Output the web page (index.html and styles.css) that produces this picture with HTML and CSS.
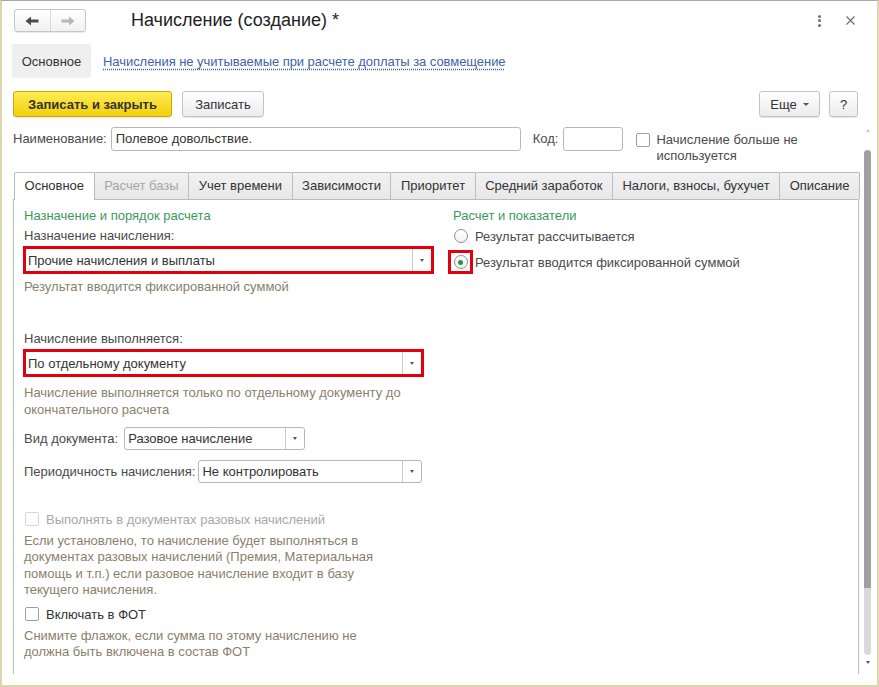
FILE: index.html
```html
<!DOCTYPE html>
<html lang="ru">
<head>
<meta charset="utf-8">
<title>Начисление (создание)</title>
<link rel="stylesheet" href="styles.css">
</head>
<body>
<div class="window">
  <header class="head">
    <div class="nav">
      <span class="nav-btn"><svg width="14" height="10" viewBox="0 0 14 10"><path d="M0.5 5 L6 0.5 V3.5 H13.5 V6.5 H6 V9.5 Z" fill="#4a4a4a"/></svg></span>
      <span class="nav-btn"><svg width="14" height="10" viewBox="0 0 14 10"><path d="M13.5 5 L8 0.5 V3.5 H0.5 V6.5 H8 V9.5 Z" fill="#b8b8b8"/></svg></span>
    </div>
    <h1 class="title">Начисление (создание) *</h1>
    <div class="head-tools">
      <span class="kebab"><i></i><i></i><i></i></span>
      <svg class="close" width="9" height="9" viewBox="0 0 9 9"><path d="M0.5 0.5 L8.5 8.5 M8.5 0.5 L0.5 8.5" stroke="#6a6a6a" stroke-width="1.1"/></svg>
    </div>
  </header>

  <nav class="subnav">
    <span class="subnav-current">Основное</span>
    <a class="subnav-link" href="#">Начисления не учитываемые при расчете доплаты за совмещение</a>
  </nav>

  <div class="toolbar">
    <button class="btn btn-primary">Записать и закрыть</button>
    <button class="btn btn-save">Записать</button>
    <span class="spacer"></span>
    <button class="btn btn-more">Еще <span class="caret"></span></button>
    <button class="btn btn-help">?</button>
  </div>

  <div class="scroll-area">
    <div class="scroll-content">
      <div class="name-row">
        <span class="field-label">Наименование:</span>
        <div class="input input-name">Полевое довольствие.</div>
        <span class="field-label code-label">Код:</span>
        <div class="input input-code"></div>
        <div class="check-group">
          <span class="checkbox"></span>
          <span class="check-text">Начисление больше не используется</span>
        </div>
      </div>

      <div class="tabs">
        <span class="tab active">Основное</span>
        <span class="tab disabled">Расчет базы</span>
        <span class="tab">Учет времени</span>
        <span class="tab">Зависимости</span>
        <span class="tab">Приоритет</span>
        <span class="tab">Средний заработок</span>
        <span class="tab">Налоги, взносы, бухучет</span>
        <span class="tab">Описание</span>
      </div>

      <div class="panel">
        <div class="col-left">
          <div class="section-title">Назначение и порядок расчета</div>
          <div class="label">Назначение начисления:</div>
          <div class="annot annot-wide">
            <div class="combo">
              <span class="combo-text">Прочие начисления и выплаты</span>
              <span class="combo-btn"><span class="tri"></span></span>
            </div>
          </div>
          <div class="hint hint-first">Результат вводится фиксированной суммой</div>

          <div class="label label-gap">Начисление выполняется:</div>
          <div class="annot annot-mid">
            <div class="combo">
              <span class="combo-text">По отдельному документу</span>
              <span class="combo-btn"><span class="tri"></span></span>
            </div>
          </div>
          <div class="hint hint-doc">Начисление выполняется только по отдельному документу до окончательного расчета</div>

          <div class="field-row row-doc">
            <span class="label-inline">Вид документа:</span>
            <div class="select select-doc">
              <span class="combo-text">Разовое начисление</span>
              <span class="combo-btn"><span class="tri"></span></span>
            </div>
          </div>
          <div class="field-row row-period">
            <span class="label-inline">Периодичность начисления:</span>
            <div class="select select-period">
              <span class="combo-text">Не контролировать</span>
              <span class="combo-btn"><span class="tri"></span></span>
            </div>
          </div>

          <div class="check-row check-disabled">
            <span class="checkbox"></span>
            <span>Выполнять в документах разовых начислений</span>
          </div>
          <div class="hint para">Если установлено, то начисление будет выполняться в документах разовых начислений (Премия, Материальная помощь и т.п.) если разовое начисление входит в базу текущего начисления.</div>

          <div class="check-row check-fot">
            <span class="checkbox"></span>
            <span>Включать в ФОТ</span>
          </div>
          <div class="hint para">Снимите флажок, если сумма по этому начислению не должна быть включена в состав ФОТ</div>
        </div>

        <div class="col-right">
          <div class="section-title right-title">Расчет и показатели</div>
          <div class="radio-row first">
            <span class="radio"></span>
            <span>Результат рассчитывается</span>
          </div>
          <div class="radio-row second">
            <span class="annot annot-radio"><span class="radio checked"></span></span>
            <span>Результат вводится фиксированной суммой</span>
          </div>
        </div>
      </div>
    </div>

    <div class="scrollbar">
      <div class="sb-up"><span class="tri tri-up"></span></div>
      <div class="sb-thumb"></div>
      <div class="sb-track"></div>
      <div class="sb-down"><span class="tri"></span></div>
    </div>
  </div>
</div>
</body>
</html>
```

FILE: styles.css
```css
html, body {
  margin: 0;
  padding: 0;
  background: #fff;
}

body {
  font-family: "Liberation Sans", Arial, sans-serif;
  font-size: 13px;
  color: #333;
}

.window {
  box-sizing: border-box;
  width: 879px;
  height: 687px;
  border-top: 1px solid #a8a8a8;
  border-left: 2px solid #ddd6ad;
  border-right: 2px solid #ddd6ad;
  border-bottom: 2px solid #ddd6ad;
  display: flex;
  flex-direction: column;
  overflow: hidden;
  background: #fff;
}

/* ---------- header ---------- */
.head {
  display: flex;
  align-items: center;
  height: 23px;
  margin-top: 8px;
  padding: 0 22px 0 12px;
}

.nav {
  display: flex;
  box-sizing: border-box;
  width: 72px;
  height: 23px;
  border: 1px solid #c6c6c6;
  border-radius: 3px;
  background: linear-gradient(#ffffff, #f1f1f1);
  box-shadow: 0 1px 1px rgba(0, 0, 0, 0.08);
}

.nav-btn {
  flex: 1;
  display: flex;
  align-items: center;
  justify-content: center;
}

.nav-btn + .nav-btn {
  border-left: 1px solid #d8d8d8;
}

.title {
  flex: 1;
  margin: 0 0 0 45px;
  font-size: 18px;
  font-weight: normal;
  color: #1e1e1e;
  line-height: 23px;
}

.head-tools {
  display: flex;
  align-items: center;
}

.kebab {
  display: flex;
  flex-direction: column;
  gap: 1.5px;
  margin-right: 25px;
}

.kebab i {
  display: block;
  width: 3px;
  height: 3px;
  border-radius: 50%;
  background: #6f6f6f;
}

/* ---------- sub navigation ---------- */
.subnav {
  display: flex;
  align-items: center;
  height: 34px;
  margin-top: 12px;
  padding-left: 10px;
}

.subnav-current {
  box-sizing: border-box;
  display: flex;
  align-items: center;
  justify-content: center;
  width: 79px;
  height: 34px;
  background: #efefef;
  border-radius: 3px;
  color: #333;
}

.subnav-link {
  margin-left: 12px;
  color: #3f63a8;
  letter-spacing: -0.05px;
  text-decoration: underline dotted;
  text-underline-offset: 3px;
}

/* ---------- toolbar ---------- */
.toolbar {
  display: flex;
  align-items: center;
  height: 26px;
  margin-top: 13px;
  padding: 0 19px 0 11px;
}

.btn {
  box-sizing: border-box;
  height: 26px;
  padding: 0 13px;
  border: 1px solid #c4c4c4;
  border-radius: 3px;
  background: linear-gradient(#ffffff, #ececec);
  box-shadow: 0 1px 1px rgba(0, 0, 0, 0.1);
  font-family: "Liberation Sans", Arial, sans-serif;
  font-size: 13px;
  color: #333;
  display: flex;
  align-items: center;
  justify-content: center;
}

.btn-primary {
  width: 159px;
  padding: 0;
  font-weight: bold;
  background: linear-gradient(#ffeb55, #f3d00c);
  border-color: #c9a80b;
}

.btn-save {
  width: 82px;
  margin-left: 10px;
  padding: 0;
}

.spacer {
  flex: 1;
}

.btn-more {
  width: 61px;
  padding: 0;
  gap: 6px;
}

.btn-help {
  width: 29px;
  margin-left: 9px;
  padding: 0;
}

.caret {
  width: 0;
  height: 0;
  border-left: 3px solid transparent;
  border-right: 3px solid transparent;
  border-top: 3px solid #555;
  margin-top: 1px;
}

/* ---------- scroll area ---------- */
.scroll-area {
  display: flex;
  height: 550px;
  margin-top: 7px;
}

.scroll-content {
  flex: 1;
  overflow: hidden;
  padding: 3px 3px 0 11px;
}

.scrollbar {
  width: 7px;
  margin: 0 6px 0 3px;
  display: flex;
  flex-direction: column;
}

.sb-up {
  height: 26px;
  display: flex;
  justify-content: center;
  padding-top: 5px;
  box-sizing: border-box;
}

.sb-thumb {
  height: 438px;
  background: #a0a0a0;
  border-radius: 4px 4px 0 0;
}

.sb-track {
  height: 67px;
  background: #d9d9d9;
  border-radius: 0 0 4px 4px;
}

.sb-down {
  display: flex;
  justify-content: center;
  padding-top: 6px;
}

.tri {
  width: 0;
  height: 0;
  border-left: 2.5px solid transparent;
  border-right: 2.5px solid transparent;
  border-top: 3px solid #555;
}

.tri-up {
  border-top: none;
  border-bottom: 3px solid #c4c4c4;
}

/* ---------- name row ---------- */
.name-row {
  display: flex;
  align-items: flex-start;
}

.field-label {
  line-height: 24px;
  color: #4a4a4a;
  margin-right: 4px;
}

.code-label {
  margin-left: 12px;
  margin-right: 5px;
}

.input {
  box-sizing: border-box;
  height: 24px;
  border: 1px solid #b8b8b8;
  border-radius: 3px;
  background: #fff;
  padding: 0 4px;
  line-height: 22px;
  color: #333;
}

.input-name {
  width: 410px;
}

.input-code {
  width: 60px;
}

.check-group {
  display: flex;
  align-items: flex-start;
  margin-left: 13px;
  padding-top: 6px;
}

.checkbox {
  flex: none;
  box-sizing: border-box;
  width: 14px;
  height: 14px;
  border: 1px solid #9f9f9f;
  border-radius: 2px;
  background: #fff;
}

.check-text {
  width: 160px;
  margin-left: 6px;
  line-height: 16px;
  margin-top: -1px;
  color: #4a4a4a;
}

/* ---------- tabs ---------- */
.tabs {
  display: flex;
  align-items: flex-start;
  width: 846px;
  height: 28px;
  margin-top: 8px;
  margin-bottom: -1px;
  padding-left: 1px;
  box-sizing: border-box;
  position: relative;
  z-index: 1;
}

.tab {
  flex: 1 0 auto;
  box-sizing: border-box;
  height: 27px;
  padding: 0 9px;
  margin-right: -1px;
  border: 1px solid #bcbcbc;
  border-bottom: none;
  border-radius: 2px 2px 0 0;
  background: linear-gradient(#f1f1f1, #e8e8e8);
  line-height: 26px;
  text-align: center;
  color: #333;
  white-space: nowrap;
}

.tab.active {
  height: 28px;
  background: #fff;
}

.tab.disabled {
  color: #a6a6a6;
}

/* ---------- panel ---------- */
.panel {
  display: flex;
  width: 846px;
  box-sizing: border-box;
  border: 1px solid #bcbcbc;
  border-bottom: none;
  padding: 8px 0 40px 9px;
}

.col-left {
  width: 411px;
  flex: none;
}

.col-right {
  margin-left: 14px;
}

.section-title {
  color: #3a9a5c;
  line-height: 16px;
  padding-left: 1px;
}

.right-title {
  padding-left: 5px;
}

.label {
  margin-top: 4px;
  line-height: 16px;
  color: #4a4a4a;
  padding-left: 1px;
}

.label-gap {
  margin-top: 36px;
}

.annot {
  border: 3px solid #e2000e;
  margin-top: 2px;
}

.annot-mid {
  width: 395px;
}

.combo {
  display: flex;
  align-items: center;
  height: 22px;
  background: #fff;
}

.combo-text {
  flex: 1;
  padding-left: 2px;
  color: #333;
  white-space: nowrap;
}

.combo-btn {
  align-self: stretch;
  width: 18px;
  border-left: 1px solid #cacaca;
  display: flex;
  align-items: center;
  justify-content: center;
}

.hint {
  color: #8a7f6b;
  line-height: 16px;
  padding-left: 1px;
}

.hint-first {
  margin-top: 5px;
}

.hint-doc {
  margin-top: 7px;
  line-height: 17px;
}

.field-row {
  display: flex;
  align-items: center;
  padding-left: 1px;
}

.row-doc {
  margin-top: 9px;
}

.row-period {
  margin-top: 10px;
}

.label-inline {
  color: #4a4a4a;
  margin-right: 3px;
}

.row-doc .label-inline {
  margin-right: 6px;
}

.select {
  box-sizing: border-box;
  display: flex;
  align-items: center;
  height: 23px;
  border: 1px solid #b8b8b8;
  border-radius: 3px;
  background: #fff;
}

.select .combo-text {
  padding-left: 3px;
}

.select-doc {
  width: 181px;
}

.select-period {
  width: 224px;
}

.check-row {
  display: flex;
  align-items: center;
  gap: 7px;
  height: 16px;
  padding-left: 2px;
}

.check-disabled {
  margin-top: 28px;
  color: #a8a8a8;
}

.check-disabled .checkbox {
  border-color: #d6d6d6;
}

.check-fot {
  margin-top: 8px;
  color: #333;
}

.para {
  max-width: 362px;
  margin-top: 6px;
  line-height: 16.3px;
}

/* ---------- radios ---------- */
.radio-row {
  display: flex;
  align-items: center;
  color: #4a4a4a;
}

.radio-row.first {
  margin-top: 4px;
  height: 16px;
  padding-left: 6px;
  gap: 7px;
}

.radio-row.second {
  margin-top: 6px;
  gap: 2px;
}

.annot-radio {
  box-sizing: border-box;
  width: 25px;
  height: 24px;
  margin-top: 0;
  display: flex;
  align-items: center;
  justify-content: center;
}

.radio {
  box-sizing: border-box;
  width: 14px;
  height: 14px;
  border: 1px solid #8e8e8e;
  border-radius: 50%;
  background: linear-gradient(#ffffff, #f2f2f2);
  display: flex;
  align-items: center;
  justify-content: center;
}

.radio.checked::after {
  content: "";
  width: 5px;
  height: 5px;
  border-radius: 50%;
  background: #23944a;
}
```
